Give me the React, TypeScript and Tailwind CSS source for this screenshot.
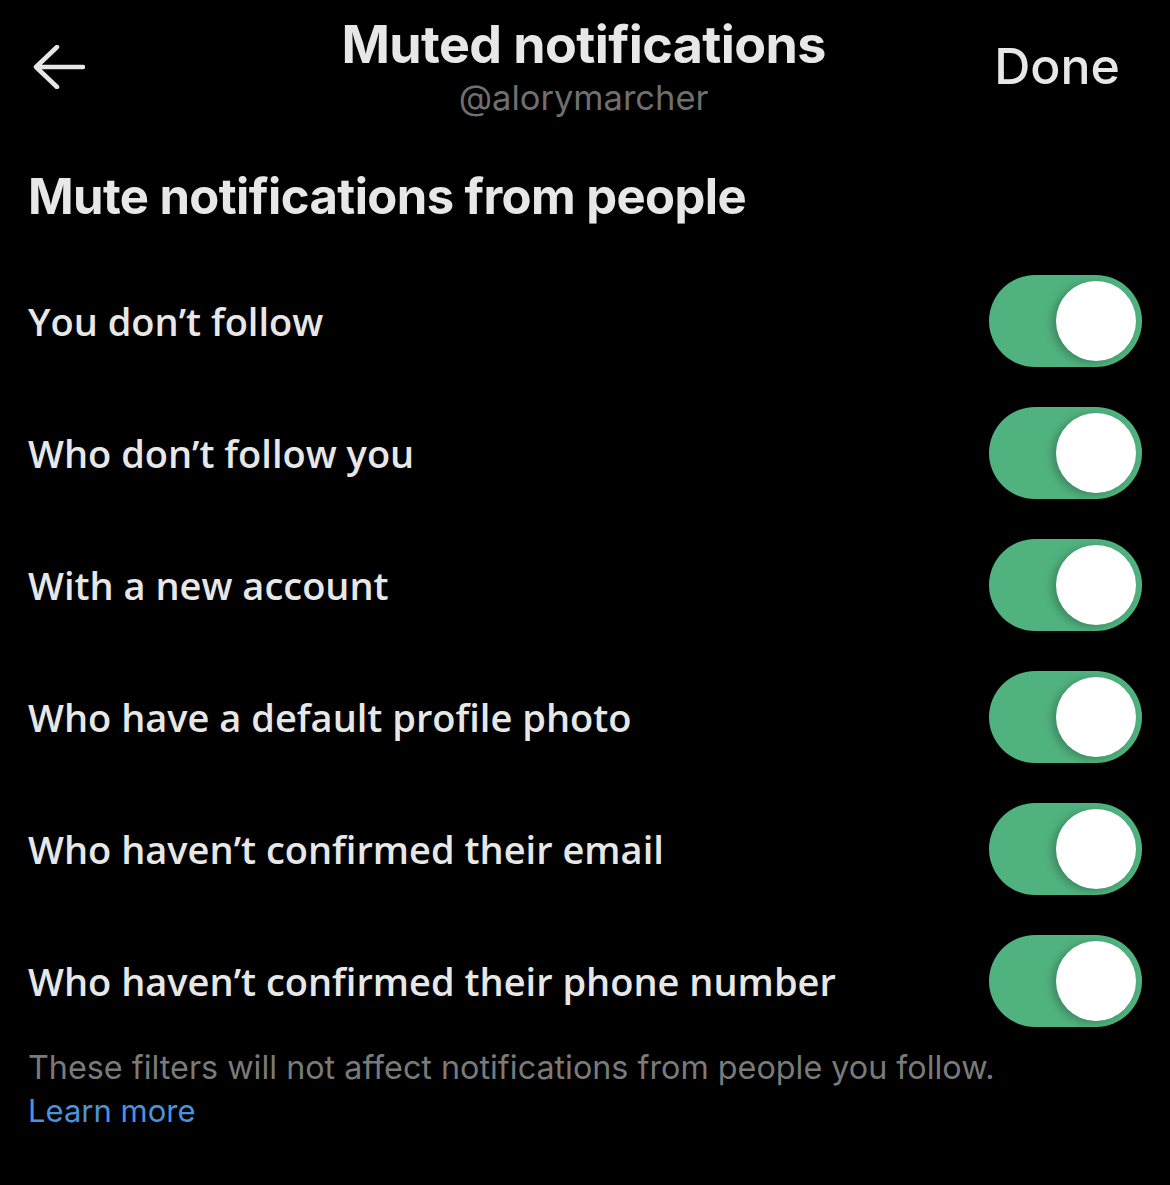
import { useState } from "react";

const rows = [
	"You don’t follow",
	"Who don’t follow you",
	"With a new account",
	"Who have a default profile photo",
	"Who haven’t confirmed their email",
	"Who haven’t confirmed their phone number",
];

function Toggle({ on, onClick }: { on: boolean; onClick: () => void }) {
	return (
		<button
			onClick={onClick}
			className={`flex items-center w-[153px] h-[92px] rounded-full px-[6px] ${
				on ? "bg-[#50b37f] justify-end" : "bg-[#3a3a3c] justify-start"
			}`}
		>
			<span className="block w-[80px] h-[80px] rounded-full bg-white shadow-[-4px_2px_8px_rgba(0,0,0,0.25)]" />
		</button>
	);
}

export default function App() {
	const [state, setState] = useState(rows.map(() => true));

	return (
		<div
			className="w-[1170px] h-[1185px] bg-black text-[#e7e7e7] overflow-hidden"
			style={{ fontFamily: "'Open Sans', 'Noto Sans', sans-serif" }}
		>
			{/* Header */}
			<div className="flex items-start justify-between pl-[33px] pr-[50px] pt-[16px]">
				<svg width="52" height="44" viewBox="0 0 52 44" className="mt-[29px]" fill="none">
					<path d="M50 22H4M24 2L3 22l21 20" stroke="#e7e7e7" strokeWidth="4.5" strokeLinecap="round" strokeLinejoin="round" />
				</svg>
				<div className="flex flex-col items-center ml-[88px]" style={{ fontFamily: "Inter, sans-serif" }}>
					<h1 className="text-[52px] font-bold leading-[58px] tracking-[-0.6px]">Muted notifications</h1>
					<span className="text-[34.5px] leading-[40px] text-[#6f6f6f] mt-[4px]">@alorymarcher</span>
				</div>
				<button className="text-[50px] font-medium leading-[56px] mt-[22px]" style={{ fontFamily: "Inter, sans-serif" }}>
					Done
				</button>
			</div>

			{/* Section */}
			<div className="px-[28px] mt-[49px]">
				<h2 className="text-[49px] font-bold leading-[60px] tracking-[-0.6px]" style={{ fontFamily: "Inter, sans-serif" }}>
					Mute notifications from people
				</h2>
				<div className="mt-[48px] flex flex-col gap-[40px]">
					{rows.map((label, i) => (
						<div key={label} className="flex items-center justify-between">
							<span className="text-[38px] font-semibold">{label}</span>
							<Toggle
								on={state[i]}
								onClick={() => setState((s) => s.map((v, j) => (j === i ? !v : v)))}
							/>
						</div>
					))}
				</div>
				<p className="mt-[19px] text-[32.3px] leading-[43px] text-[#7a7a7a]" style={{ fontFamily: "Inter, sans-serif" }}>
					These filters will not affect notifications from people you follow.
					<br />
					<a className="text-[#4a93dc] text-[31px]">Learn more</a>
				</p>
			</div>
		</div>
	);
}
